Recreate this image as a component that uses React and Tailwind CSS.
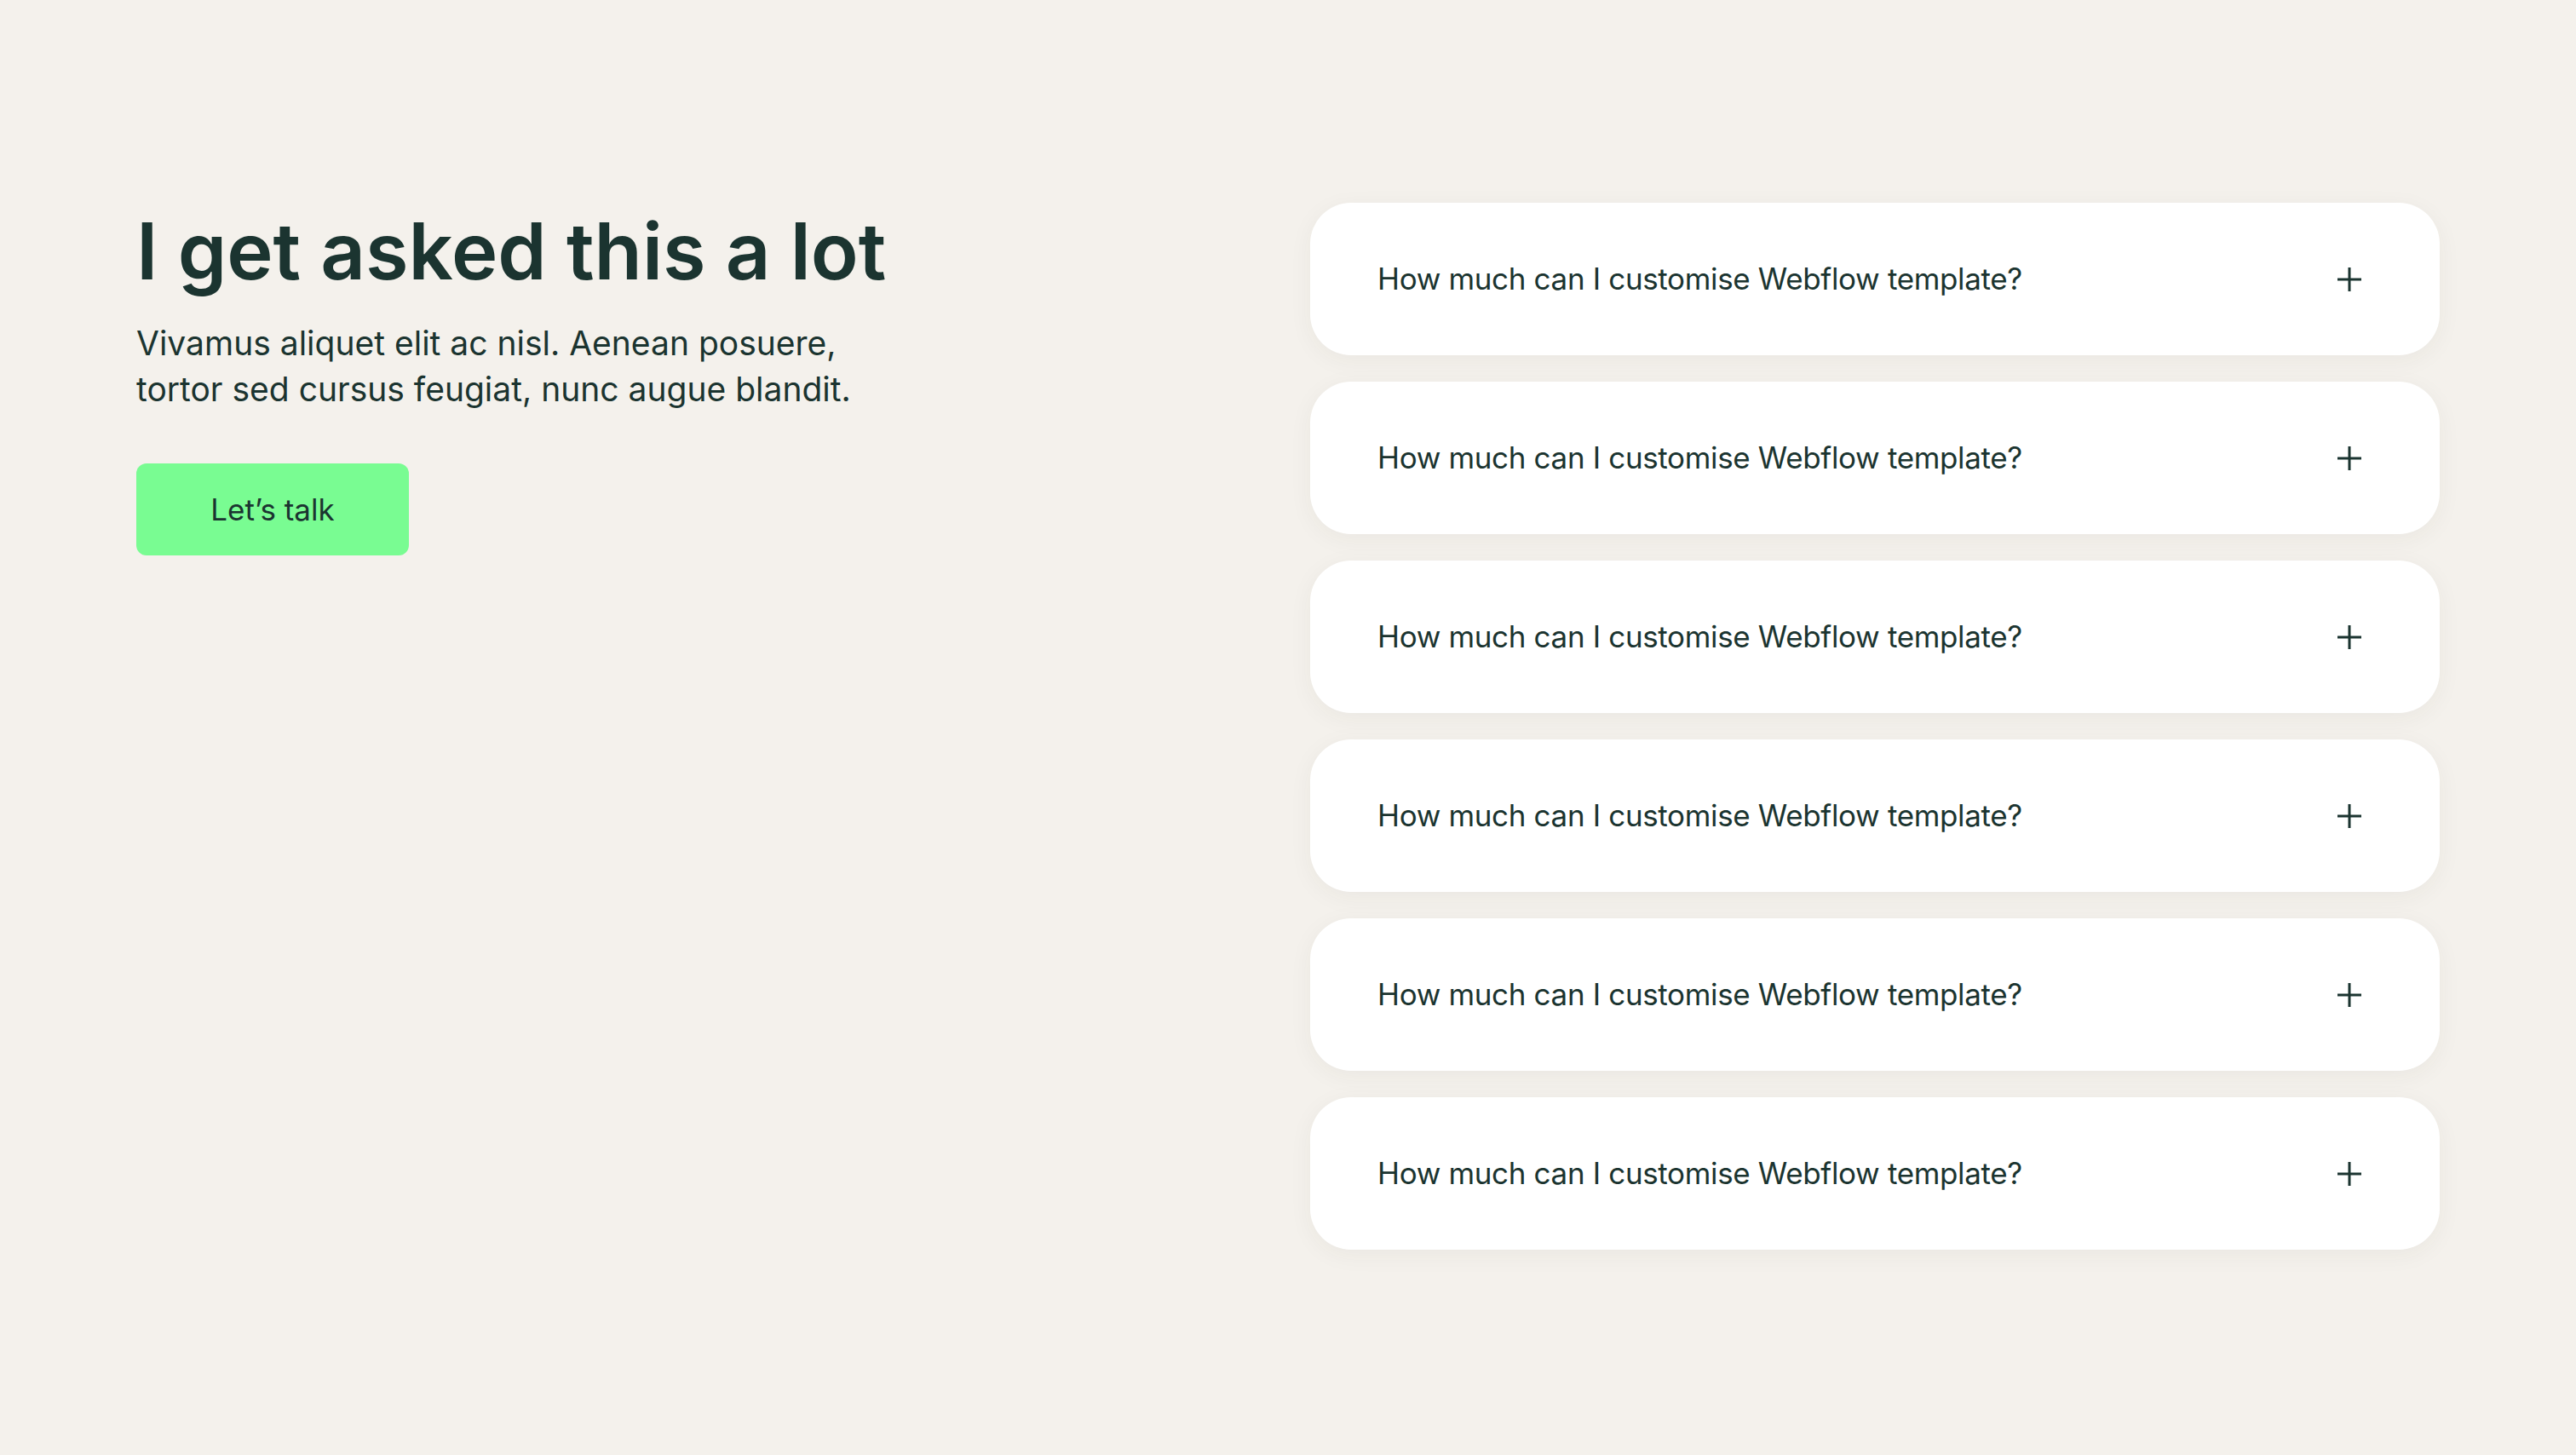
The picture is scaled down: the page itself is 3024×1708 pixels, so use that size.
const FAQS = Array.from({ length: 6 }, (_, i) => ({
  id: i,
  question: "How much can I customise Webflow template?",
}));

function PlusIcon() {
  return (
    <svg width="28" height="28" viewBox="0 0 28 28" fill="none">
      <path d="M14 0v28M0 14h28" stroke="#1b3430" strokeWidth="3" />
    </svg>
  );
}

export default function App() {
  return (
    <div
      className="min-h-screen w-full bg-[#f4f1ec] text-[#1b3430]"
      style={{ fontFamily: "Inter, 'Noto Sans', sans-serif" }}
    >
      <div className="flex justify-between px-[160px] pt-[238px] pb-[240px]">
        <div className="flex flex-col items-start pt-[6px]">
          <h1 className="text-[92px] font-semibold leading-[1.1]">
            I get asked this a lot
          </h1>
          <p className="mt-[31px] w-[900px] text-[39px] leading-[54px]">
            Vivamus aliquet elit ac nisl. Aenean posuere, tortor sed cursus
            feugiat, nunc augue blandit.
          </p>
          <button className="mt-[60px] h-[108px] w-[320px] rounded-[12px] bg-[#79fc92] text-[35px] text-[#1b3430]">
            Let’s talk
          </button>
        </div>

        <div className="flex w-[1326px] flex-col gap-[31px]">
          {FAQS.map((faq) => (
            <div
              key={faq.id}
              className="flex h-[179px] items-center justify-between rounded-[48px] bg-white pl-[79px] pr-[92px] shadow-[0_6px_28px_rgba(60,50,30,0.05)]"
            >
              <span className="text-[35px] tracking-[-0.01em]">
                {faq.question}
              </span>
              <PlusIcon />
            </div>
          ))}
        </div>
      </div>
    </div>
  );
}
